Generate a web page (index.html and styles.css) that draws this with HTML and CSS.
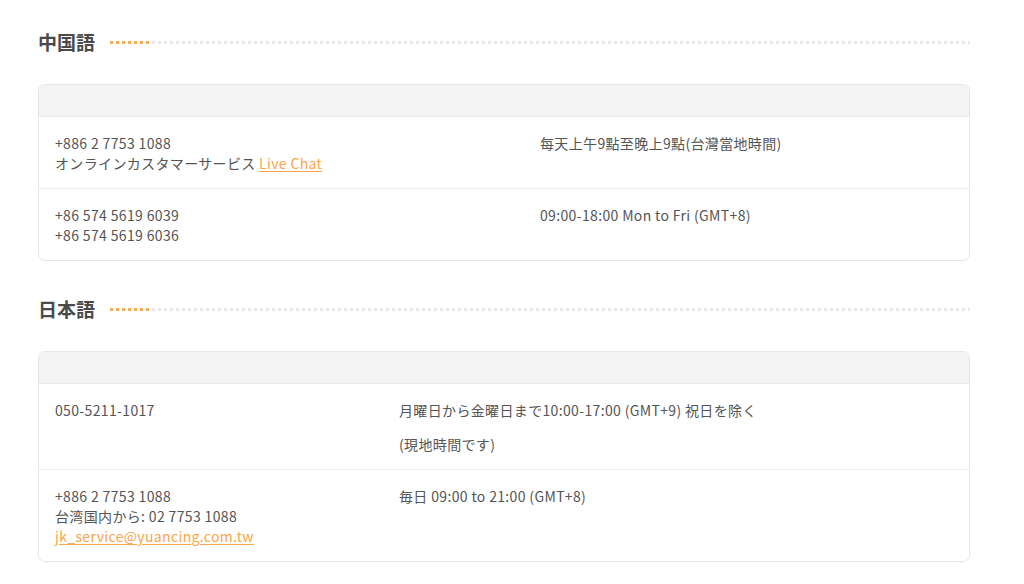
FILE: index.html
```html
<!DOCTYPE html>
<html lang="ja">
<head>
<meta charset="utf-8">
<link rel="stylesheet" href="styles.css">
</head>
<body>
<div class="page">
  <section class="section">
    <div class="heading">
      <h2 class="title">中国語</h2>
      <div class="dots"><span class="dots-accent"></span><span class="dots-rest"></span></div>
    </div>
    <div class="table table-cn">
      <div class="thead"></div>
      <div class="row">
        <div class="cell">+886 2 7753 1088<br>オンラインカスタマーサービス <a class="link" href="#">Live Chat</a></div>
        <div class="cell">每天上午9點至晚上9點(台灣當地時間)</div>
      </div>
      <div class="row">
        <div class="cell">+86 574 5619 6039<br>+86 574 5619 6036</div>
        <div class="cell">09:00-18:00 Mon to Fri (GMT+8)</div>
      </div>
    </div>
  </section>
  <section class="section">
    <div class="heading">
      <h2 class="title">日本語</h2>
      <div class="dots"><span class="dots-accent"></span><span class="dots-rest"></span></div>
    </div>
    <div class="table table-jp">
      <div class="thead"></div>
      <div class="row">
        <div class="cell">050-5211-1017</div>
        <div class="cell"><p class="para">月曜日から金曜日まで10:00-17:00 (GMT+9) 祝日を除く</p><p class="para">(現地時間です)</p></div>
      </div>
      <div class="row">
        <div class="cell">+886 2 7753 1088<br>台湾国内から: 02 7753 1088<br><a class="link" href="#">jk_service@yuancing.com.tw</a></div>
        <div class="cell">毎日 09:00 to 21:00 (GMT+8)</div>
      </div>
    </div>
  </section>
</div>
</body>
</html>
```
FILE: styles.css
```css
* { box-sizing: border-box; }
html, body { margin: 0; padding: 0; background: #fff; }
body {
  font-family: "Noto Sans CJK JP", "Noto Sans", sans-serif;
  font-size: 14px;
  line-height: 20px;
  letter-spacing: 0.35px;
  color: #555;
}
.page {
  width: 932px;
  margin-left: 38px;
  padding-top: 30px;
}
.section + .section { margin-top: 36px; }
.heading {
  display: flex;
  align-items: center;
  gap: 15px;
  height: 24px;
  margin-bottom: 30px;
}
.title {
  margin: 0;
  font-size: 19px;
  line-height: 24px;
  font-weight: 700;
  letter-spacing: 0;
  color: #4a4a4a;
}
.dots {
  flex: 1;
  display: flex;
  height: 3px;
}
.dots-accent {
  width: 39px;
  flex: none;
  background: repeating-linear-gradient(to right, #f8ac55 0 3px, transparent 3px 6px);
}
.dots-rest {
  flex: 1;
  margin-left: 3px;
  background: repeating-linear-gradient(to right, #e8e8e8 0 3px, transparent 3px 6px);
}
.table {
  border: 1px solid #e6e6e6;
  border-radius: 7px;
  overflow: hidden;
}
.thead {
  height: 32px;
  background: #f3f3f3;
  border-bottom: 1px solid #e8e8e8;
}
.row {
  display: grid;
  border-top: 1px solid #ececec;
}
.thead + .row { border-top: 0; }
.table-cn .row { grid-template-columns: 485px 1fr; }
.table-jp .row { grid-template-columns: 344px 1fr; }
.cell {
  padding: 16px 16px 15px;
}
.para { margin: 0; }
.para + .para { margin-top: 14px; }
.link {
  color: #f7a64c;
  text-decoration: underline;
  text-underline-offset: 2px;
}
```
